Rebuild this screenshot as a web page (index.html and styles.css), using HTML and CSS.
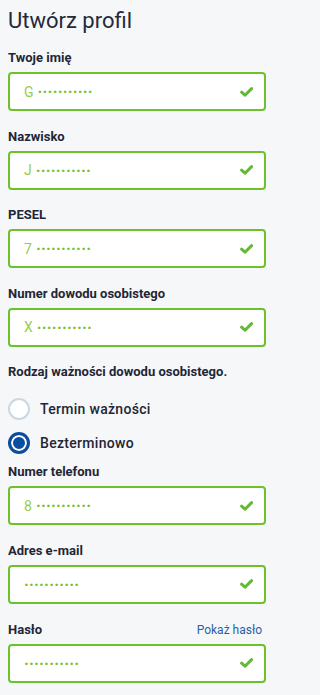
FILE: index.html
```html
<!DOCTYPE html>
<html lang="pl">
<head>
<meta charset="utf-8">
<link rel="stylesheet" href="styles.css">
</head>
<body>
<main class="page">
  <h1 class="title">Utwórz profil</h1>

  <div class="field">
    <div class="label-row"><label class="label">Twoje imię</label></div>
    <div class="input"><span class="value"><span class="first">G</span><span class="mask">···········</span></span><svg class="check" viewBox="0 0 13 10"><path d="M1.6 5.2 L5 8.2 L11.6 1.6"/></svg></div>
  </div>

  <div class="field">
    <div class="label-row"><label class="label">Nazwisko</label></div>
    <div class="input"><span class="value"><span class="first">J</span><span class="mask">···········</span></span><svg class="check" viewBox="0 0 13 10"><path d="M1.6 5.2 L5 8.2 L11.6 1.6"/></svg></div>
  </div>

  <div class="field">
    <div class="label-row"><label class="label">PESEL</label></div>
    <div class="input"><span class="value"><span class="first">7</span><span class="mask">···········</span></span><svg class="check" viewBox="0 0 13 10"><path d="M1.6 5.2 L5 8.2 L11.6 1.6"/></svg></div>
  </div>

  <div class="field">
    <div class="label-row"><label class="label">Numer dowodu osobistego</label></div>
    <div class="input"><span class="value"><span class="first">X</span><span class="mask">···········</span></span><svg class="check" viewBox="0 0 13 10"><path d="M1.6 5.2 L5 8.2 L11.6 1.6"/></svg></div>
  </div>

  <div class="radio-group">
    <div class="label-row"><span class="label">Rodzaj ważności dowodu osobistego.</span></div>
    <div class="radios">
      <div class="radio"><span class="dot"></span><span class="radio-text">Termin ważności</span></div>
      <div class="radio checked"><span class="dot"></span><span class="radio-text">Bezterminowo</span></div>
    </div>
  </div>

  <div class="field">
    <div class="label-row"><label class="label">Numer telefonu</label></div>
    <div class="input"><span class="value"><span class="first">8</span><span class="mask">···········</span></span><svg class="check" viewBox="0 0 13 10"><path d="M1.6 5.2 L5 8.2 L11.6 1.6"/></svg></div>
  </div>

  <div class="field">
    <div class="label-row"><label class="label">Adres e-mail</label></div>
    <div class="input"><span class="value"><span class="mask">···········</span></span><svg class="check" viewBox="0 0 13 10"><path d="M1.6 5.2 L5 8.2 L11.6 1.6"/></svg></div>
  </div>

  <div class="field">
    <div class="label-row"><label class="label">Hasło</label><span class="link">Pokaż hasło</span></div>
    <div class="input"><span class="value"><span class="mask">···········</span></span><svg class="check" viewBox="0 0 13 10"><path d="M1.6 5.2 L5 8.2 L11.6 1.6"/></svg></div>
  </div>
</main>
</body>
</html>
```

FILE: styles.css
```css
html, body {
  margin: 0;
  padding: 0;
  background: #f6f7f9;
}

body {
  font-family: Roboto, "Liberation Sans", sans-serif;
  color: #1f2637;
}

.page {
  width: 275px;
  box-sizing: border-box;
  padding: 8px 9px 0 8px;
  display: flex;
  flex-direction: column;
}

.title {
  margin: 0 0 16px;
  font-size: 22px;
  line-height: 26px;
  font-weight: 400;
  color: #232b3b;
}

.field {
  display: flex;
  flex-direction: column;
  gap: 6px;
  margin-bottom: 17.6px;
}

.label-row {
  display: flex;
  justify-content: space-between;
  align-items: baseline;
}

.label {
  font-size: 13px;
  line-height: 16px;
  font-weight: 700;
  color: #1f2637;
}

.link {
  font-size: 12px;
  color: #2a5fa8;
  padding-right: 4px;
}

.input {
  height: 39px;
  box-sizing: border-box;
  border: 2px solid #6dc22c;
  border-radius: 4px;
  background: #ffffff;
  display: flex;
  align-items: center;
  justify-content: space-between;
  padding: 0 11px 0 14px;
}

.value {
  display: flex;
  align-items: center;
  gap: 4px;
  color: #8ccb3c;
  white-space: pre;
}

.first {
  font-size: 14px;
  color: #9acd45;
}

.mask {
  font-size: 16px;
  letter-spacing: 0.2px;
  font-weight: 700;
  color: #76c030;
}

.check {
  width: 13px;
  height: 10px;
  fill: none;
  stroke: #64b934;
  stroke-width: 3;
  stroke-linecap: round;
  stroke-linejoin: round;
}

.radio-group {
  display: flex;
  flex-direction: column;
  margin-bottom: 10px;
}

.radios {
  display: flex;
  flex-direction: column;
  gap: 12px;
  margin-top: 18px;
}

.radio {
  display: flex;
  align-items: center;
  gap: 10px;
  height: 22px;
}

.dot {
  width: 22px;
  height: 22px;
  box-sizing: border-box;
  border-radius: 50%;
  border: 2px solid #c8d9e4;
  background: #ffffff;
  flex: none;
}

.radio.checked .dot {
  border: 3px solid #0b4e9f;
  background: #0b4e9f;
  box-shadow: inset 0 0 0 2px #ffffff;
}

.radio-text {
  font-size: 14px;
  font-weight: 500;
  color: #1f2637;
  letter-spacing: 0.3px;
}
```
